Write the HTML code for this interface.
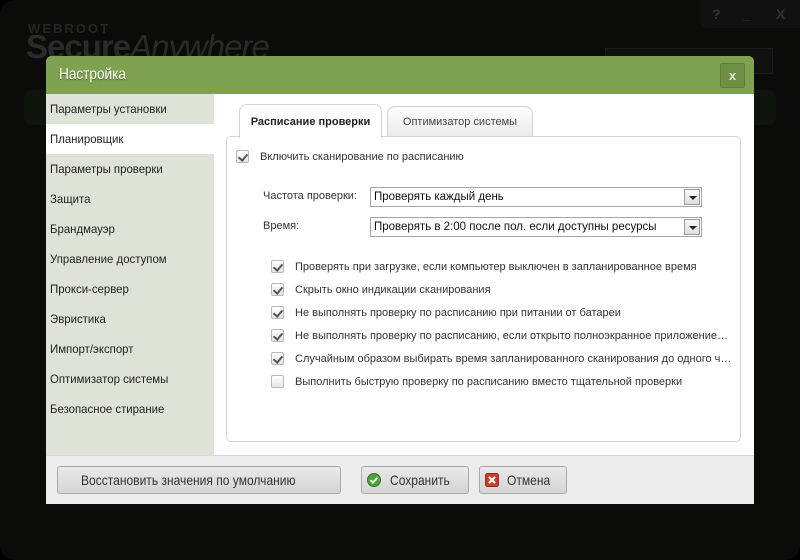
<!DOCTYPE html>
<html><head><meta charset="utf-8"><style>
*{margin:0;padding:0;box-sizing:border-box}
body{width:800px;height:560px;background:#000;position:relative;overflow:hidden;font-family:"Liberation Sans",sans-serif}
.app{position:absolute;left:0;top:0;width:800px;height:560px;background:#0b0c0a;border-radius:14px}
.abs{position:absolute}
.n{display:inline-block;transform-origin:0 50%;white-space:nowrap}
.dlg{position:absolute;left:46px;top:56px;width:708px;height:448px;background:#fff;border-radius:6px 6px 0 0;overflow:hidden}
.tb{position:absolute;left:0;top:0;width:708px;height:38px;background:#7fa250}
.tb span.n{position:absolute;left:13px;top:10px;font-size:16px;color:#fff;transform:scaleX(.85);text-shadow:0 1px 1px #4a6330}
.cls{position:absolute;left:674px;top:7px;width:25px;height:25px;background:#6e9044;border:1px solid #5f7e3a;border-radius:2px;color:#dfe8cf;font-weight:bold;font-size:13px;text-align:center;line-height:23px}
.side{position:absolute;left:0;top:38px;width:168px;height:361px;background:#dfe2d6}
.side div{height:30px;line-height:30px;padding-left:4px;font-size:12px;color:#222}
.side div span{display:inline-block;transform:scaleX(.95);transform-origin:0 50%;white-space:nowrap}
.side .sel{background:#fff}
.foot{position:absolute;left:0;top:399px;width:708px;height:49px;background:#ededed;border-top:1px solid #d8d8d8}
.btn{position:absolute;top:10px;height:28px;border:1px solid #a9a9a9;border-radius:3px;background:linear-gradient(#e9e9e9,#d4d4d4);font-size:14px;color:#333;line-height:26px;overflow:hidden}
.btn .n{position:absolute;top:0;transform:scaleX(.86)}
.panel{position:absolute;left:180px;top:80px;width:515px;height:306px;border:1px solid #d4d4d4;border-radius:5px}
.tab{position:absolute;border:1px solid #d4d4d4;border-bottom:none;border-radius:8px 8px 0 0;font-size:11px;text-align:center}
.cb{position:absolute;width:13px;height:13px;border:1px solid #b8b8b8;border-radius:2px;background:linear-gradient(#fff,#e4e4e4)}
.cb.on::after{content:"";position:absolute;left:3px;top:1px;width:4px;height:7px;border:solid #555;border-width:0 2px 2px 0;transform:rotate(40deg)}
.t{position:absolute;font-size:11px;color:#333;white-space:nowrap}
.sel2{position:absolute;left:324px;width:332px;height:20px;border:1px solid #a5a5a5;background:#fff;font-size:11.5px;color:#111;line-height:18px;padding-left:3px}
.sel2 i{position:absolute;right:1px;top:1px;width:16px;height:16px;border:1px solid #999;background:linear-gradient(#fafafa,#ddd)}
.sel2 i::after{content:"";position:absolute;left:4px;top:6px;border:4px solid transparent;border-top:4px solid #222;border-bottom:none}
</style></head><body>
<div class="app">
 <div class="abs" style="left:28px;top:21px;font-size:13px;font-weight:bold;color:#262626;letter-spacing:2px">WEBROOT</div>
 <div class="abs" style="left:26px;top:28px;font-size:33px;font-weight:bold;color:#2a2a2a;letter-spacing:-1px">Secure<i style="font-weight:normal">Anywhere</i></div>
 <div class="abs" style="left:700px;top:0;width:100px;height:28px;background:#101110;border-radius:0 0 0 8px"></div>
 <div class="abs" style="left:712px;top:6px;color:#333;font-weight:bold;font-size:14px">?</div>
 <div class="abs" style="left:743px;top:6px;color:#333;font-weight:bold;font-size:14px">_</div>
 <div class="abs" style="left:776px;top:6px;color:#333;font-weight:bold;font-size:14px">X</div>
 <div class="abs" style="left:605px;top:48px;width:168px;height:26px;background:#111;border:1px solid #1a1a1a"></div>
 <div class="abs" style="left:24px;top:90px;width:752px;height:35px;background:#0f140c;border-radius:8px"></div>
</div>
<div class="dlg">
 <div class="tb"><span class="n">Настройка</span><div class="cls">x</div></div>
 <div class="side">
  <div><span>Параметры установки</span></div><div class="sel"><span>Планировщик</span></div><div><span>Параметры проверки</span></div><div><span>Защита</span></div><div><span>Брандмауэр</span></div><div><span>Управление доступом</span></div><div><span>Прокси-сервер</span></div><div><span>Эвристика</span></div><div><span>Импорт/экспорт</span></div><div><span>Оптимизатор системы</span></div><div><span>Безопасное стирание</span></div>
 </div>
 <div class="panel"></div>
 <div class="tab" style="left:193px;top:48px;width:143px;height:34px;background:#fff;font-weight:bold;line-height:34px;color:#222;z-index:2">Расписание проверки</div>
 <div class="tab" style="left:341px;top:50px;width:146px;height:30px;background:linear-gradient(#fdfdfd,#ececec);line-height:30px;color:#444">Оптимизатор системы</div>
 <div class="cb on" style="left:190px;top:94px"></div>
 <div class="t" style="left:214px;top:95px">Включить сканирование по расписанию</div>
 <div class="t" style="left:217px;top:134px">Частота проверки:</div>
 <div class="sel2" style="top:131px">Проверять каждый день<i></i></div>
 <div class="t" style="left:217px;top:164px">Время:</div>
 <div class="sel2" style="top:161px">Проверять в 2:00 после пол. если доступны ресурсы<i></i></div>
 <div class="cb on" style="left:225px;top:204px"></div><div class="t" style="left:249px;top:205px">Проверять при загрузке, если компьютер выключен в запланированное время</div>
 <div class="cb on" style="left:225px;top:227px"></div><div class="t" style="left:249px;top:228px">Скрыть окно индикации сканирования</div>
 <div class="cb on" style="left:225px;top:250px"></div><div class="t" style="left:249px;top:251px">Не выполнять проверку по расписанию при питании от батареи</div>
 <div class="cb on" style="left:225px;top:273px"></div><div class="t" style="left:249px;top:274px">Не выполнять проверку по расписанию, если открыто полноэкранное приложение…</div>
 <div class="cb on" style="left:225px;top:296px"></div><div class="t" style="left:249px;top:297px">Случайным образом выбирать время запланированного сканирования до одного ч…</div>
 <div class="cb" style="left:225px;top:319px"></div><div class="t" style="left:249px;top:320px">Выполнить быструю проверку по расписанию вместо тщательной проверки</div>
 <div class="foot">
  <div class="btn" style="left:11px;width:284px"><span class="n" style="left:23px">Восстановить значения по умолчанию</span></div>
  <div class="btn" style="left:315px;width:108px"><svg style="position:absolute;left:5px;top:6px" width="14" height="14" viewBox="0 0 14 14"><circle cx="7" cy="7" r="6.5" fill="#4ea43a" stroke="#2f7a22"/><path d="M3.5 7.2l2.4 2.4 4.6-5" stroke="#fff" stroke-width="1.8" fill="none"/></svg><span class="n" style="left:28px">Сохранить</span></div>
  <div class="btn" style="left:433px;width:88px"><svg style="position:absolute;left:5px;top:6px" width="14" height="14" viewBox="0 0 14 14"><rect x=".5" y=".5" width="13" height="13" rx="2" fill="#c8412c" stroke="#8e2a1b"/><path d="M4 4l6 6M10 4l-6 6" stroke="#fff" stroke-width="2"/></svg><span class="n" style="left:27px">Отмена</span></div>
 </div>
</div>
</body></html>
